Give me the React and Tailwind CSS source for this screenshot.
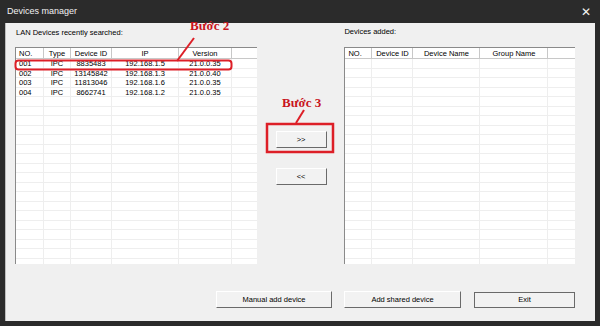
import React from 'react';

const font = { fontFamily: '"Liberation Sans", Arial, sans-serif' };

const lanCols = [
  { label: 'NO.', w: 'w-[28px]', align: 'text-left pl-[3px]' },
  { label: 'Type', w: 'w-[27px]', align: 'text-center' },
  { label: 'Device ID', w: 'w-[41px]', align: 'text-center' },
  { label: 'IP', w: 'w-[67px]', align: 'text-center' },
  { label: 'Version', w: 'w-[53px]', align: 'text-center' },
];

const addedCols = [
  { label: 'NO.', w: 'w-[27px]', align: 'text-left pl-[3px]' },
  { label: 'Device ID', w: 'w-[41px]', align: 'text-center' },
  { label: 'Device Name', w: 'w-[67px]', align: 'text-center' },
  { label: 'Group Name', w: 'w-[68px]', align: 'text-center' },
];

const lanRows = [
  ['001', 'IPC', '8835483', '192.168.1.5', '21.0.0.35'],
  ['002', 'IPC', '13145842', '192.168.1.3', '21.0.0.40'],
  ['003', 'IPC', '11813046', '192.168.1.6', '21.0.0.35'],
  ['004', 'IPC', '8662741', '192.168.1.2', '21.0.0.35'],
];

const Table = ({ cols, rows }) => {
  const filled = Array.from({ length: 22 }, (_, i) => rows[i] || null);
  return (
    <div className="h-[217px] bg-white border-l border-t border-[#8a8a8a] overflow-hidden flex flex-col">
      <div className="flex h-[11px] border-b border-[#c8c8c8] bg-white shrink-0">
        {cols.map((c) => (
          <div key={c.label} className={`${c.w} ${c.align} border-r border-[#c8c8c8] leading-[11px] shrink-0`}>
            {c.label}
          </div>
        ))}
        <div className="flex-1" />
      </div>
      {filled.map((r, i) => (
        <div key={i} className="flex h-[9.5px] shrink-0 border-b border-[#eeeeee]">
          {cols.map((c, j) => (
            <div key={c.label} className={`${c.w} ${c.align} border-r border-[#eeeeee] leading-[9px] shrink-0`}>
              {r ? r[j] : ''}
            </div>
          ))}
          <div className="flex-1" />
        </div>
      ))}
    </div>
  );
};

const Btn = ({ children, w, exit }) => (
  <div
    className={`${w} flex items-center justify-center text-[7.5px] text-black bg-[#f2f2f2] ${
      exit
        ? 'h-[16px] border border-[#6a6a6a]'
        : 'h-[17px] border-t border-l border-r border-b border-t-[#ffffff] border-l-[#ffffff] border-r-[#6a6a6a] border-b-[#6a6a6a]'
    }`}
  >
    {children}
  </div>
);

export default function App() {
  return (
    <div className="relative w-[600px] h-[326px] bg-[#2b2b2b] overflow-hidden" style={font}>
      <div className="h-[23px] flex items-center justify-between pl-[7px] pr-[9px]">
        <span className="text-[9px] text-[#f2f2f2]">Devices manager</span>
        <span className="text-[#f4f4f4] text-[12px] leading-none">✕</span>
      </div>
      <div className="mx-[5px] h-[298px] bg-[#f0f0f0] border-l border-[#bdbdbd] pl-[9px] pr-[20px] flex flex-col text-[7.5px] text-black">
        <div className="flex">
          <div className="w-[242px]">
            <div className="h-[24px] pt-[5px] pl-[1px] leading-[9px]">LAN Devices recently searched:</div>
            <Table cols={lanCols} rows={lanRows} />
          </div>
          <div className="w-[88px] flex flex-col items-start pl-[19px] pt-[108px] gap-[20px]">
            <Btn w="w-[51px]">&gt;&gt;</Btn>
            <Btn w="w-[51px]">&lt;&lt;</Btn>
          </div>
          <div className="w-[231px]">
            <div className="h-[24px] pt-[4px] pl-[-1px] leading-[9px]">Devices added:</div>
            <Table cols={addedCols} rows={[]} />
          </div>
        </div>
        <div className="flex justify-end items-end gap-[12px] mt-[27px]">
          <Btn w="w-[116px]">Manual add device</Btn>
          <Btn w="w-[117px]">Add shared device</Btn>
          <div className="ml-[1px]">
            <Btn w="w-[101px]" exit>Exit</Btn>
          </div>
        </div>
      </div>

      {/* annotations */}
      <svg className="absolute left-0 top-0" width="600" height="326">
        <rect x="15.5" y="60.5" width="216" height="9" rx="3" fill="none" stroke="#dd1f27" strokeWidth="2" />
        <line x1="194" y1="38" x2="177" y2="61" stroke="#dd1f27" strokeWidth="2" />
        <rect x="267" y="124" width="66" height="28" fill="none" stroke="#dd1f27" strokeWidth="2.5" />
        <line x1="304" y1="110" x2="296" y2="123" stroke="#dd1f27" strokeWidth="2" />
      </svg>
      <div
        className="absolute left-[190px] top-[19px] text-[13px] font-bold text-[#c8141c] leading-none"
        style={{ fontFamily: '"Liberation Serif", "Times New Roman", serif' }}
      >
        Bước 2
      </div>
      <div
        className="absolute left-[282px] top-[96px] text-[13px] font-bold text-[#c8141c] leading-none"
        style={{ fontFamily: '"Liberation Serif", "Times New Roman", serif' }}
      >
        Bước 3
      </div>
    </div>
  );
}
